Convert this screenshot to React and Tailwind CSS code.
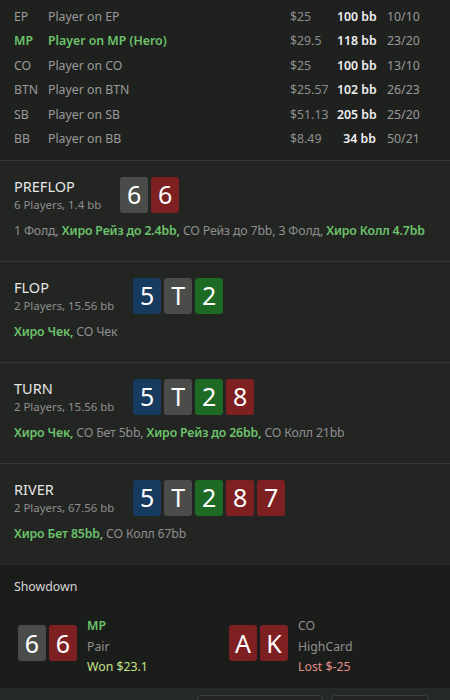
import React from "react";

const players = [
  { pos: "EP", name: "Player on EP", stack: "$25", bb: "100 bb", hands: "10/10" },
  { pos: "MP", name: "Player on MP (Hero)", stack: "$29.5", bb: "118 bb", hands: "23/20", hero: true },
  { pos: "CO", name: "Player on CO", stack: "$25", bb: "100 bb", hands: "13/10" },
  { pos: "BTN", name: "Player on BTN", stack: "$25.57", bb: "102 bb", hands: "26/23" },
  { pos: "SB", name: "Player on SB", stack: "$51.13", bb: "205 bb", hands: "25/20" },
  { pos: "BB", name: "Player on BB", stack: "$8.49", bb: "34 bb", hands: "50/21" },
];

const suitBg = {
  s: "bg-[#4a4c4a]",
  h: "bg-[#7e1f21]",
  d: "bg-[#173a5f]",
  c: "bg-[#1d6a25]",
};

const Card = ({ rank, suit }) => (
  <div
    className={`w-[28px] h-[36px] rounded-[3px] flex items-center justify-center text-white text-[25px] leading-none ${suitBg[suit]}`}
  >
    {rank}
  </div>
);

const Cards = ({ cards }) => (
  <div className="flex gap-[3px]">
    {cards.map((c, i) => (
      <Card key={i} rank={c[0]} suit={c[1]} />
    ))}
  </div>
);

const streets = [
  {
    title: "PREFLOP",
    sub: "6 Players, 1.4 bb",
    cards: ["6s", "6h"],
    actions: [
      ["1 Фолд, ", false],
      ["Хиро Рейз до 2.4bb, ", true],
      ["CO Рейз до 7bb, 3 Фолд, ", false],
      ["Хиро Колл 4.7bb", true],
    ],
  },
  {
    title: "FLOP",
    sub: "2 Players, 15.56 bb",
    cards: ["5d", "Ts", "2c"],
    actions: [
      ["Хиро Чек, ", true],
      ["CO Чек", false],
    ],
  },
  {
    title: "TURN",
    sub: "2 Players, 15.56 bb",
    cards: ["5d", "Ts", "2c", "8h"],
    actions: [
      ["Хиро Чек, ", true],
      ["CO Бет 5bb, ", false],
      ["Хиро Рейз до 26bb, ", true],
      ["CO Колл 21bb", false],
    ],
  },
  {
    title: "RIVER",
    sub: "2 Players, 67.56 bb",
    cards: ["5d", "Ts", "2c", "8h", "7h"],
    actions: [
      ["Хиро Бет 85bb, ", true],
      ["CO Колл 67bb", false],
    ],
  },
];

const App = () => {
  return (
    <div
      className="w-[450px] h-[700px] overflow-hidden bg-[#1f211f] text-[#9a9a9a] text-[12.3px]"
      style={{ fontFamily: '"Noto Sans", "Open Sans", sans-serif' }}
    >
      {/* players table */}
      <div className="pt-[5px] pb-[9px] pl-[14px]">
        {players.map((p) => (
          <div key={p.pos} className="flex items-center h-[24.4px] whitespace-nowrap">
            <div className={`w-[34px] ${p.hero ? "text-[#6cc26a] font-semibold" : ""}`}>{p.pos}</div>
            <div className={`flex-1 ${p.hero ? "text-[#6cc26a] font-semibold" : ""}`}>{p.name}</div>
            <div className="w-[47px] text-[#8d8d8d]">{p.stack}</div>
            <div className="w-[39px] text-right text-[#efefef] font-semibold">{p.bb}</div>
            <div className="w-[60px] pl-[11px] mr-[14px]">{p.hands}</div>
          </div>
        ))}
      </div>

      {/* streets */}
      {streets.map((s) => (
        <div key={s.title} className="bg-[#232523] border-t border-[#353835] px-[14px] pt-[15px] pb-[20px]">
          <div className="flex items-center gap-[19px]">
            <div className="whitespace-nowrap">
              <div className="text-[14.5px] leading-[20px] text-[#e6e6e6]">{s.title}</div>
              <div className="text-[11.4px] leading-[17px] text-[#8f8f8f]">{s.sub}</div>
            </div>
            <Cards cards={s.cards} />
          </div>
          <div className="mt-[8px] leading-[20px] whitespace-nowrap tracking-[-0.15px]">
            {s.actions.map(([t, hero], i) => (
              <span key={i} className={hero ? "text-[#6cc26a] font-semibold" : "text-[#8f8f8f]"}>
                {t}
              </span>
            ))}
          </div>
        </div>
      ))}

      {/* showdown */}
      <div className="bg-[#1b1d1b] border-t border-[#262826] pt-[12px] pb-[10px]">
        <div className="px-[14px] text-[#d6d6d6] leading-[20px]">Showdown</div>
        <div className="flex mt-[17px] pl-[18px]">
          <div className="w-[211px] flex items-start gap-[10px]">
            <div className="mt-[11px]">
              <Cards cards={["6s", "6h"]} />
            </div>
            <div className="leading-[20.5px] pt-[2px]">
              <div className="text-[#6cc26a] font-semibold">MP</div>
              <div className="text-[#8f8f8f]">Pair</div>
              <div className="text-[#c4e28a]">Won $23.1</div>
            </div>
          </div>
          <div className="flex items-start gap-[10px]">
            <div className="mt-[11px]">
              <Cards cards={["Ah", "Kh"]} />
            </div>
            <div className="leading-[20.5px] pt-[2px]">
              <div className="text-[#8f8f8f]">CO</div>
              <div className="text-[#8f8f8f]">HighCard</div>
              <div className="text-[#e38d8d]">Lost $-25</div>
            </div>
          </div>
        </div>
      </div>

      {/* bottom bar */}
      <div className="bg-[#262a26] h-[20px] pt-[7px] flex gap-[8px] pl-[197px]">
        <div className="w-[126px] h-[24px] rounded-[4px] border border-[#3c403c] bg-[#222522]" />
        <div className="w-[98px] h-[24px] rounded-[4px] border border-[#3c403c] bg-[#222522]" />
      </div>
    </div>
  );
};

export default App;
